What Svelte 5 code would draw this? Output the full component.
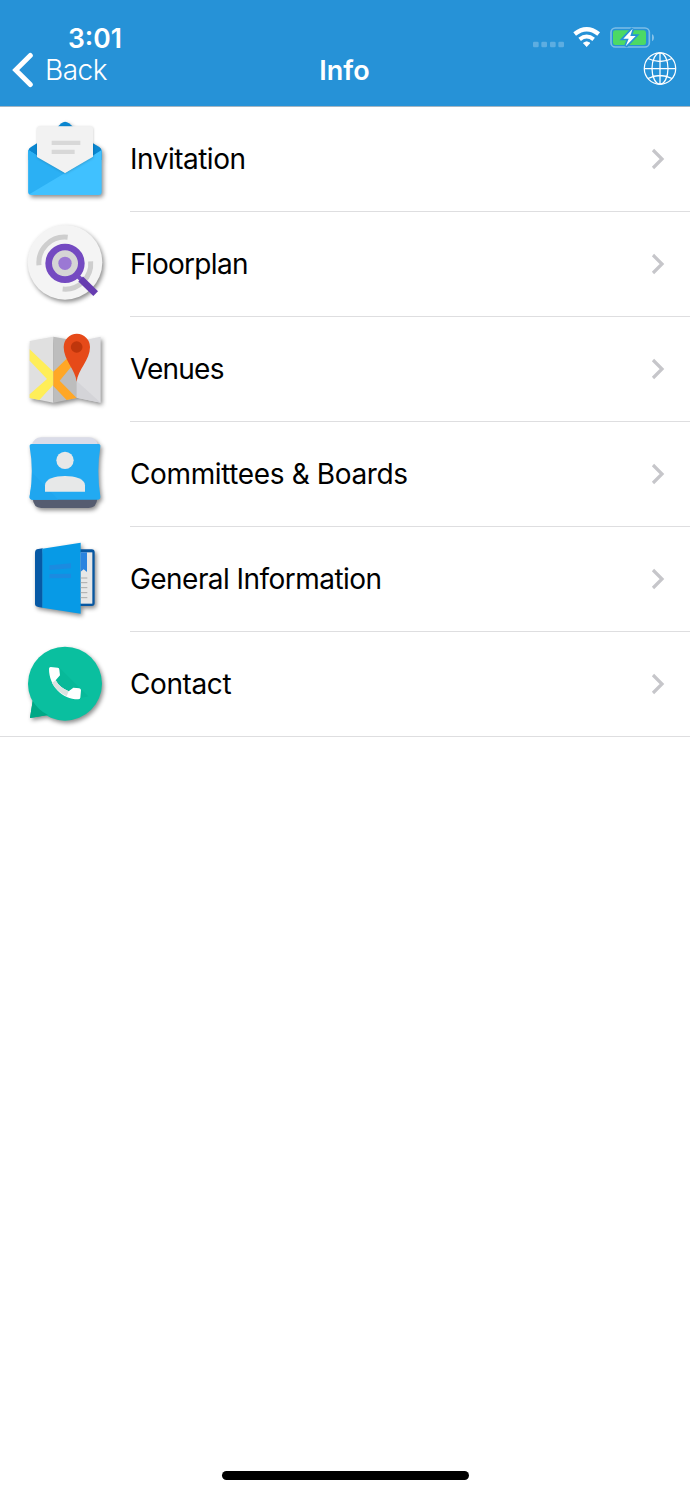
<script>
  const items = [
    { label: 'Invitation', icon: 'mail', spacing: -0.5 },
    { label: 'Floorplan', icon: 'search', spacing: -0.7 },
    { label: 'Venues', icon: 'map', spacing: -0.8 },
    { label: 'Committees & Boards', icon: 'person', spacing: -0.37 },
    { label: 'General Information', icon: 'book', spacing: -0.55 },
    { label: 'Contact', icon: 'phone', spacing: -0.4 }
  ];
</script>

<div class="screen">
  <header>
    <div class="status">
      <span class="time">3:01</span>
      <svg class="signals" width="130" height="30" viewBox="0 0 390 90">
        <g fill="#fff" opacity=".25">
          <rect x="9" y="65" width="17" height="17" rx="4" /><rect x="34" y="65" width="17" height="17" rx="4" />
          <rect x="60" y="65" width="17" height="17" rx="4" /><rect x="85" y="65" width="17" height="17" rx="4" />
        </g>
        <g fill="none" stroke="#fff">
          <path d="M134 42Q170 13 206 42" stroke-width="13" />
          <path d="M149 58Q170 41 191 58" stroke-width="12" />
        </g>
        <path d="M160 69Q170 61 180 69L170 80Z" fill="#fff" stroke="#fff" stroke-width="2" stroke-linejoin="round" />
        <rect x="243" y="24" width="115" height="57" rx="13" fill="none" stroke="#fff" stroke-opacity=".4" stroke-width="5" />
        <path d="M366 42Q372 46 372 53Q372 60 366 64Z" fill="#fff" opacity=".45" />
        <rect x="249" y="31" width="99" height="44" rx="7" fill="#4cd964" />
        <path d="M308 26L280 56H296L287 79L317 48H301Z" fill="#fff" stroke="#2692d7" stroke-width="10" paint-order="stroke" />
      </svg>
    </div>
    <nav>
      <div class="back">
        <svg width="22" height="36" viewBox="0 0 22 36"><path d="M18.3 3.4L3.7 18L18.3 32.5" fill="none" stroke="#fff" stroke-width="5" stroke-linecap="round" stroke-linejoin="miter" /></svg>
        <span>Back</span>
      </div>
      <h1>Info</h1>
      <svg class="globe" width="34" height="34" viewBox="0 0 34 34" fill="none" stroke="#fff" stroke-width="1.25">
        <circle cx="17" cy="16.5" r="15.7" />
        <ellipse cx="17" cy="16.5" rx="8" ry="15.7" />
        <path d="M17 .8V32.2M1.3 16.5H32.7M5 6.5Q17 12.5 29 6.5M5 26.5Q17 20.5 29 26.5" />
      </svg>
    </nav>
  </header>

  <main>
    {#each items as item}
      <div class="row">
        <svg class="icon" width="110" height="100" viewBox="0 0 330 300">
          {#if item.icon === 'mail'}
            <g class="shadow">
              <path d="M143 50L154 40Q165 31 177 40L189 50Z" fill="#0a87d1" />
              <path d="M55 123Q55 115 63 111L81 100H249L268 111Q275 115 275 123V150H55Z" fill="#0a87d1" />
              <path d="M55 120L165 189L275 120V246Q275 255 266 255H64Q55 255 55 246Z" fill="#40c1ff" />
            </g>
            <path d="M55 120L165 189L58 253Q55 250 55 246Z" fill="#2bb0f4" />
            <path class="soft" d="M81 57Q81 49 89 49H241Q249 49 249 57V140L165 189L81 141Z" fill="#f2f2f2" />
            <path d="M125 92H211V105H125ZM125 119H194V132H125Z" fill="#d8d8d8" />
          {:else if item.icon === 'search'}
            <circle class="shadow" cx="165" cy="142" r="112" fill="#f4f4f4" />
            <g fill="none" stroke="#cecece" stroke-width="15">
              <path d="M87 151A77 77 0 0 1 173 67" />
              <path d="M242 139A77 77 0 0 1 158 222" />
            </g>
            <circle cx="165" cy="145" r="40" fill="#d5d5d5" />
            <circle cx="165" cy="145" r="20" fill="#9b78d4" />
            <path d="M200 180L222 202" stroke="#744ac1" stroke-width="13" />
            <path d="M212 192L257 236" stroke="#663cb0" stroke-width="20" />
            <circle cx="165" cy="145" r="49" fill="none" stroke="#744ac1" stroke-width="20" />
          {:else if item.icon === 'map'}
            <g class="shadow">
              <path d="M59 63L130 50V248L59 234Z" fill="#e0e0e0" />
              <path d="M130 50L200 63V234L130 248Z" fill="#bdbdbd" />
              <path d="M200 65L272 50V248L200 233Z" fill="#dddde0" />
            </g>
            <path d="M200 183L272 248L200 233Z" fill="#d4d4d8" />
            <path d="M59 88L130 155V194L88 240L59 234V223L111 177L59 122Z" fill="#ffee58" />
            <path d="M130 155L176 110L188 135L149 182L200 234L170 240L130 198Z" fill="#ffa726" />
            <path d="M200 185C196 149 161 120 161 81A39 39 0 0 1 240 81C240 120 204 149 200 185Z" fill="#e64a19" />
            <circle cx="200" cy="81" r="17.5" fill="#bf360c" />
          {:else if item.icon === 'person'}
            <g class="shadow">
              <path d="M66 60Q72 37 93 37H237Q258 37 264 60Z" fill="#dadce8" />
              <path d="M68 220H262Q260 249 236 249H94Q70 249 68 220Z" fill="#555c70" />
              <path d="M65 57H266Q272 57 271 65Q259 138 271 214Q272 224 264 224H66Q58 224 59 214Q72 138 59 65Q58 57 65 57Z" fill="#22aaf2" />
            </g>
            <path d="M68 145L145 224H66Q58 224 59 214Q67 180 68 145Z" fill="#1fa6ef" />
            <circle cx="165" cy="106" r="26" fill="#e7e8e8" />
            <path d="M105 200V181C105 144 225 144 225 181V200Z" fill="#e7e8e8" />
          {:else if item.icon === 'book'}
            <g class="shadow">
              <path d="M200 58H245Q254 58 254 67V219Q254 228 245 228H200Z" fill="#0857a1" />
              <path d="M75 68Q75 58 85 57L98 55V233L85 231Q75 229 75 222Z" fill="#0759a5" />
              <path d="M97 56L212 38V251L97 233Z" fill="#079ae6" />
            </g>
            <path d="M212 67H247V221H212Z" fill="#e7e7e7" />
            <path d="M212 67H231V126L221 118L212 125Z" fill="#2a83df" />
            <path d="M212 144H232M212 158H232M212 173H232M212 188H232M212 203H232" stroke="#ababab" stroke-width="3" />
            <path d="M118 106L183 100V115L118 120ZM118 132L183 131V144L118 145Z" fill="#1b8be0" />
          {:else}
            <g class="shadow">
              <path d="M68 198L60 249L114 240Z" fill="#00a886" />
              <circle cx="165" cy="146" r="111" fill="#0abf9f" />
            </g>
            <path d="M68 198L60 249L114 240Q85 226 68 198Z" fill="#00a886" />
            <path d="M151 101L213 163L235 184L191 194L136 146Z" fill="#07b999" />
            <path d="M122 96L143 98Q148 98 148 104L150 121L137 136Q148 157 176 169L190 158L208 160Q213 161 213 166L211 188Q210 193 204 193C157 193 117 152 117 101Q117 96 122 96Z" fill="#fff" />
            <path d="M137 136Q148 157 176 169L170 184Q138 168 126 144Z" fill="#dce2e1" />
          {/if}
        </svg>
        <div class="cell">
          <span class="label" style="letter-spacing: {item.spacing}px">{item.label}</span>
          <svg width="14" height="22" viewBox="0 0 14 22"><path d="M2 2L11 11L2 20" fill="none" stroke="#c6c6ca" stroke-width="3.2" /></svg>
        </div>
      </div>
    {/each}
  </main>
  <div class="home"></div>
</div>

<style>
  :global(body) { margin: 0; }
  .screen {
    display: flex;
    flex-direction: column;
    width: 690px;
    height: 1493px;
    box-sizing: border-box;
    padding-bottom: 13px;
    overflow: hidden;
    background: #fff;
    color: #000;
    font-family: Inter, "Liberation Sans", sans-serif;
  }
  header {
    height: 107px;
    flex: none;
    box-sizing: border-box;
    border-bottom: 1px solid #a3b5c2;
    background: #2692d7;
    color: #fff;
  }
  .status {
    display: flex;
    justify-content: space-between;
    height: 52px;
    box-sizing: border-box;
    padding: 20px 30px 0 68px;
  }
  .time { font-size: 26.5px; line-height: 36px; font-weight: 600; letter-spacing: 0; }
  .signals { flex: none; }
  nav {
    display: grid;
    grid-template-columns: 1fr auto 1fr;
    height: 36px;
    padding: 0 13px 0 12px;
  }
  .back {
    display: flex;
    gap: 11px;
    font-size: 28px;
    line-height: 37px;
    font-weight: 300;
    letter-spacing: -.5px;
  }
  h1 { margin: 0; font-size: 27px; line-height: 37px; font-weight: 600; }
  .globe { justify-self: end; }
  .row {
    display: flex;
    height: 105px;
    padding-left: 10px;
  }
  .icon { flex: none; margin-top: 3px; margin-right: 10px; }
  .shadow { filter: drop-shadow(5px 7px 7px rgb(0 0 0 / .45)); }
  .soft { filter: drop-shadow(1px 2px 3px rgb(0 0 0 / .2)); }
  .cell {
    display: flex;
    flex: 1;
    align-items: center;
    justify-content: space-between;
    box-sizing: border-box;
    padding-right: 25px;
    border-bottom: 1px solid #dedee0;
  }
  .row:last-child { border-bottom: 1px solid #dedee0; box-sizing: border-box; }
  .row:last-child .cell { border-bottom: 0; }
  .label { font-size: 28px; line-height: 36px; white-space: nowrap; }
  .home { width: 247px; height: 9px; margin: auto auto 0; border-radius: 5px; background: #000; }
</style>
